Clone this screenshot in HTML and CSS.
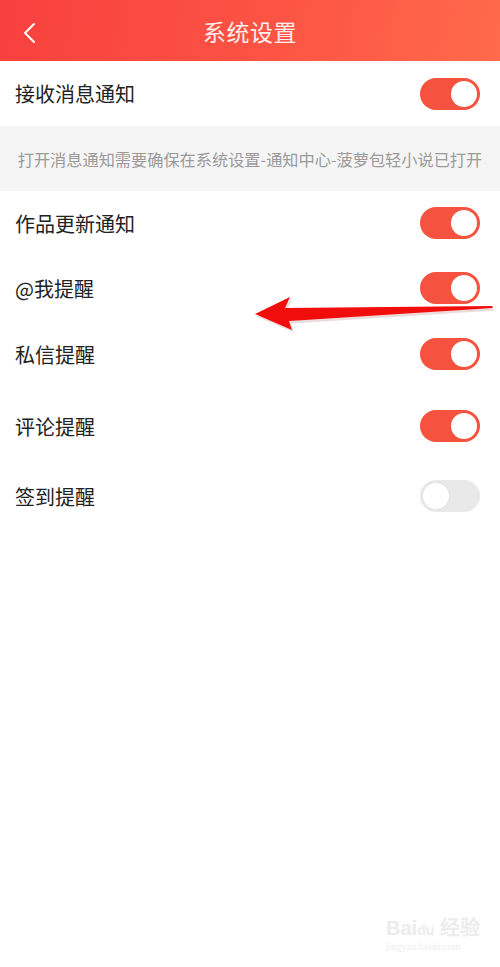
FILE: index.html
```html
<!DOCTYPE html>
<html lang="zh-CN">
<head>
  <meta charset="UTF-8">
  <title>系统设置</title>
  <meta name="viewport" content="width=device-width, initial-scale=1.0">
  <link rel="stylesheet" href="styles.css">
</head>
<body>

  <header class="topbar">
    <svg class="back" width="14" height="22" viewBox="0 0 14 22">
      <polyline points="11,2 2,11 11,20" fill="none" stroke="#fff" stroke-width="2" stroke-linecap="round" stroke-linejoin="round"/>
    </svg>
    <h1>系统设置</h1>
  </header>

  <div class="row">
    <span>接收消息通知</span>
    <span class="switch on"></span>
  </div>

  <div class="tip">打开消息通知需要确保在系统设置-通知中心-菠萝包轻小说已打开</div>

  <div class="row row-a">
    <span>作品更新通知</span>
    <span class="switch on"></span>
  </div>
  <div class="row row-b">
    <span>@我提醒</span>
    <span class="switch on"></span>
  </div>
  <div class="row row-b">
    <span>私信提醒</span>
    <span class="switch on"></span>
  </div>
  <div class="row row-c">
    <span>评论提醒</span>
    <span class="switch on"></span>
  </div>
  <div class="row row-d">
    <span>签到提醒</span>
    <span class="switch"></span>
  </div>

  <!-- annotation arrow over the list -->
  <svg class="arrow" width="500" height="967" viewBox="0 0 500 967">
    <polygon points="256,315 291,298 286,309 492,307 494,309 290,322 293,331" fill="#7a1010" opacity="0.15" transform="translate(1,1.5)"/>
    <polygon points="255,314 290,297 285,308 492,306 493,308 289,321 292,330" fill="#f20d0d"/>
  </svg>

  <div class="watermark">
    <div class="wm-logo">Bai<span class="paw">du</span> 经验</div>
    <div class="wm-url">jingyan.baidu.com</div>
  </div>

</body>
</html>
```

FILE: styles.css
```css
body {
  margin: 0;
  background: #fff;
  font-family: "Noto Sans CJK SC", "Noto Sans", sans-serif;
  color: #222;
  width: 500px;
  height: 967px;
  overflow: hidden;
  position: relative;
}
.topbar {
  height: 61px;
  background: linear-gradient(100deg, #f8403e 0%, #fc5444 55%, #ff6a4b 100%);
  display: flex;
  align-items: center;
  justify-content: center;
  position: relative;
}
.topbar h1 {
  margin: 0;
  font-size: 23px;
  font-weight: normal;
  color: rgba(255, 255, 255, 0.93);
  letter-spacing: 0.5px;
}
.back {
  position: absolute;
  left: 23px;
  top: 22px;
}
.row {
  height: 65px;
  display: flex;
  align-items: center;
  justify-content: space-between;
  padding: 0 20px 0 15px;
  font-size: 20px;
}
.row-a { height: 64px; }
.row-b { height: 66px; }
.row-c { height: 78px; }
.row-d { height: 62px; }
.tip {
  height: 65px;
  background: #f5f5f5;
  display: flex;
  align-items: center;
  justify-content: center;
  font-size: 16.2px;
  color: #9a9a9a;
}
.switch {
  width: 60px;
  height: 32px;
  border-radius: 16px;
  background: #e9e9e9;
  position: relative;
  flex: none;
}
.switch::after {
  content: "";
  position: absolute;
  top: 3px;
  left: 3px;
  width: 26px;
  height: 26px;
  border-radius: 50%;
  background: #fff;
  box-shadow: 0 0 0 1px #e2e2e2;
}
.switch.on {
  background: #f5523f;
}
.switch.on::after {
  left: 31px;
  box-shadow: none;
}
.arrow {
  position: absolute;
  left: 0;
  top: 0;
  pointer-events: none;
}
.watermark {
  position: absolute;
  left: 386px;
  top: 918px;
  color: #ececec;
  font-family: "Liberation Sans", sans-serif;
}
.wm-logo {
  font-size: 20px;
  font-weight: bold;
  line-height: 20px;
}
.paw {
  font-size: 14px;
}
.wm-url {
  font-size: 10px;
  font-family: "Liberation Serif", serif;
  line-height: 14px;
}
```
